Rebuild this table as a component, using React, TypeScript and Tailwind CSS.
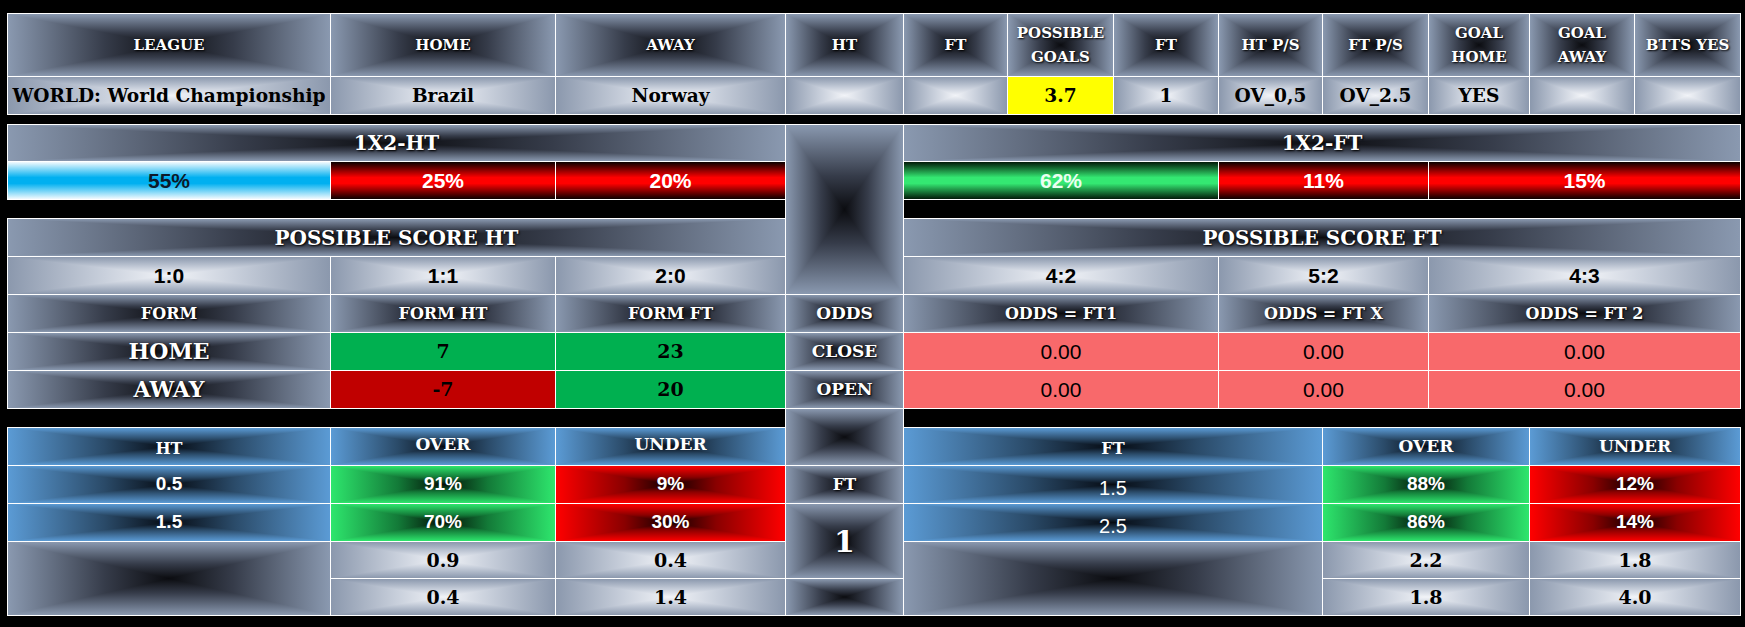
import type { ReactNode } from 'react'

// cell backgrounds (box gradients built from two linear layers)
const DARK =
  'bg-[image:linear-gradient(90deg,#8a99b0,#363c4a_30%,#0b0c10_50%,#363c4a_70%,#8a99b0),linear-gradient(180deg,#8a99b0,#363c4a_30%,#0b0c10_50%,#363c4a_70%,#8a99b0)] bg-blend-lighten'
const LIGHT =
  'bg-[image:linear-gradient(90deg,#8b98ad,#c9d0dc_30%,#f2f4f8_50%,#c9d0dc_70%,#8b98ad),linear-gradient(180deg,#8b98ad,#c9d0dc_30%,#f2f4f8_50%,#c9d0dc_70%,#8b98ad)] bg-blend-darken'
const BLUE =
  'bg-[image:linear-gradient(90deg,#5b9bd5,#2a4a68_30%,#050a12_50%,#2a4a68_70%,#5b9bd5),linear-gradient(180deg,#5b9bd5,#2a4a68_30%,#050a12_50%,#2a4a68_70%,#5b9bd5)] bg-blend-lighten'
const GREEN_BOX =
  'bg-[image:linear-gradient(90deg,#2ee66d,#137a38_30%,#020d05_50%,#137a38_70%,#2ee66d),linear-gradient(180deg,#2ee66d,#137a38_30%,#020d05_50%,#137a38_70%,#2ee66d)] bg-blend-lighten'
const RED_BOX =
  'bg-[image:linear-gradient(90deg,#ff0000,#8a0000_30%,#0d0000_50%,#8a0000_70%,#ff0000),linear-gradient(180deg,#ff0000,#8a0000_30%,#0d0000_50%,#8a0000_70%,#ff0000)] bg-blend-lighten'
const BAR_RED = 'bg-[linear-gradient(180deg,#0a0000,#ff0000_42%,#ff0000_58%,#0a0000)]'
const BAR_GREEN = 'bg-[linear-gradient(180deg,#021a08,#34e872_42%,#34e872_58%,#021a08)]'
const BAR_BLUE = 'bg-[linear-gradient(180deg,#f2fafe,#00b0f0_42%,#00b0f0_58%,#f2fafe)]'

const SLAB = "font-['DejaVu_Serif',serif] font-bold"
const SANS = "font-['Liberation_Sans',Arial,sans-serif]"
const SHADOW = '[text-shadow:1px_1px_2px_#000]'

function Cell({ className = '', children }: { className?: string; children?: ReactNode }) {
  return (
    <div className={`flex items-center justify-center text-center ring-1 ring-white ${className}`}>
      {children}
    </div>
  )
}

const TOP_HEAD = ['LEAGUE', 'HOME', 'AWAY', 'HT', 'FT', 'POSSIBLE\nGOALS', 'FT', 'HT P/S', 'FT P/S', 'GOAL\nHOME', 'GOAL\nAWAY', 'BTTS YES']
const TOP_DATA = ['WORLD: World Championship', 'Brazil', 'Norway', '', '', '3.7', '1', 'OV_0,5', 'OV_2.5', 'YES', '', '']

const COLS = 'grid-cols-[322px_224px_229px_117px_103px_105px_104px_103px_105px_100px_104px_105px]'

export default function App() {
  const title = `${DARK} ${SLAB} text-white text-[20px] ${SHADOW}`
  const formHead = `${DARK} ${SLAB} text-white text-[16px] ${SHADOW}`
  const mid = `${DARK} ${SLAB} text-white ${SHADOW}`
  const score = `${LIGHT} ${SANS} font-bold text-black text-[21px]`
  const odd = `bg-[#f8696b] ${SANS} text-black text-[21px]`
  const light = `${LIGHT} ${SLAB} text-black text-[19px]`
  const bar = `${SANS} text-[21px] font-bold`
  const pct = `${SANS} text-[19px] font-bold text-white`

  return (
    <div className="h-[627px] w-[1745px] overflow-hidden bg-black pl-[7px] pt-[13px]">
      {/* match table */}
      <div className={`grid w-fit gap-px p-px ${COLS} grid-rows-[62px_37px]`}>
        {TOP_HEAD.map((h, i) => (
          <Cell
            key={`h${i}`}
            className={`${DARK} ${SLAB} whitespace-pre-line px-1 text-[15px] leading-[24px] text-white ${SHADOW}`}
          >
            {h}
          </Cell>
        ))}
        {TOP_DATA.map((d, i) => (
          <Cell
            key={`d${i}`}
            className={`${i === 5 ? 'bg-[#ffff00]' : LIGHT} ${SLAB} whitespace-nowrap text-[18.6px] text-black`}
          >
            {d}
          </Cell>
        ))}
      </div>

      {/* stats grid */}
      <div
        className={`mt-[9px] grid w-fit gap-px p-px ${COLS} grid-rows-[36px_37px_18px_37px_37px_37px_37px_37px_18px_37px_37px_37px_36px_36px]`}
      >
        <Cell className={`col-start-1 col-end-4 row-start-1 ${title}`}>1X2-HT</Cell>
        <Cell className={`col-start-4 col-end-5 row-start-1 row-end-6 ${mid}`} />
        <Cell className={`col-start-5 col-end-13 row-start-1 ${title}`}>1X2-FT</Cell>

        <Cell className={`col-start-1 row-start-2 ${BAR_BLUE} ${bar} text-[#0d1a2a]`}>55%</Cell>
        <Cell className={`col-start-2 row-start-2 ${BAR_RED} ${bar} text-white`}>25%</Cell>
        <Cell className={`col-start-3 row-start-2 ${BAR_RED} ${bar} text-white`}>20%</Cell>
        <Cell className={`col-start-5 col-end-8 row-start-2 ${BAR_GREEN} ${bar} text-[#eafff0]`}>62%</Cell>
        <Cell className={`col-start-8 col-end-10 row-start-2 ${BAR_RED} ${bar} text-white`}>11%</Cell>
        <Cell className={`col-start-10 col-end-13 row-start-2 ${BAR_RED} ${bar} text-white`}>15%</Cell>

        <Cell className={`col-start-1 col-end-4 row-start-4 ${title}`}>POSSIBLE SCORE HT</Cell>
        <Cell className={`col-start-5 col-end-13 row-start-4 ${title}`}>POSSIBLE SCORE FT</Cell>

        <Cell className={`col-start-1 row-start-5 ${score}`}>1:0</Cell>
        <Cell className={`col-start-2 row-start-5 ${score}`}>1:1</Cell>
        <Cell className={`col-start-3 row-start-5 ${score}`}>2:0</Cell>
        <Cell className={`col-start-5 col-end-8 row-start-5 ${score}`}>4:2</Cell>
        <Cell className={`col-start-8 col-end-10 row-start-5 ${score}`}>5:2</Cell>
        <Cell className={`col-start-10 col-end-13 row-start-5 ${score}`}>4:3</Cell>

        <Cell className={`col-start-1 row-start-6 ${formHead}`}>FORM</Cell>
        <Cell className={`col-start-2 row-start-6 ${formHead}`}>FORM HT</Cell>
        <Cell className={`col-start-3 row-start-6 ${formHead}`}>FORM FT</Cell>
        <Cell className={`col-start-4 row-start-6 ${mid} text-[17px]`}>ODDS</Cell>
        <Cell className={`col-start-5 col-end-8 row-start-6 ${formHead}`}>ODDS = FT1</Cell>
        <Cell className={`col-start-8 col-end-10 row-start-6 ${formHead}`}>ODDS = FT X</Cell>
        <Cell className={`col-start-10 col-end-13 row-start-6 ${formHead}`}>ODDS = FT 2</Cell>

        <Cell className={`col-start-1 row-start-7 ${DARK} ${SLAB} text-[22px] text-white ${SHADOW}`}>HOME</Cell>
        <Cell className={`col-start-2 row-start-7 bg-[#00b050] ${SLAB} text-[19px] text-black`}>7</Cell>
        <Cell className={`col-start-3 row-start-7 bg-[#00b050] ${SLAB} text-[19px] text-black`}>23</Cell>
        <Cell className={`col-start-4 row-start-7 ${mid} text-[17px]`}>CLOSE</Cell>
        <Cell className={`col-start-5 col-end-8 row-start-7 ${odd}`}>0.00</Cell>
        <Cell className={`col-start-8 col-end-10 row-start-7 ${odd}`}>0.00</Cell>
        <Cell className={`col-start-10 col-end-13 row-start-7 ${odd}`}>0.00</Cell>

        <Cell className={`col-start-1 row-start-8 ${DARK} ${SLAB} text-[22px] text-white ${SHADOW}`}>AWAY</Cell>
        <Cell className={`col-start-2 row-start-8 bg-[#c00000] ${SLAB} text-[19px] text-black`}>-7</Cell>
        <Cell className={`col-start-3 row-start-8 bg-[#00b050] ${SLAB} text-[19px] text-black`}>20</Cell>
        <Cell className={`col-start-4 row-start-8 ${mid} text-[17px]`}>OPEN</Cell>
        <Cell className={`col-start-5 col-end-8 row-start-8 ${odd}`}>0.00</Cell>
        <Cell className={`col-start-8 col-end-10 row-start-8 ${odd}`}>0.00</Cell>
        <Cell className={`col-start-10 col-end-13 row-start-8 ${odd}`}>0.00</Cell>

        <Cell className={`col-start-4 row-start-9 row-end-11 ${mid}`} />

        {/* over / under */}
        <Cell className={`col-start-1 row-start-10 ${BLUE} ${SLAB} pt-1 text-[16px] text-white`}>HT</Cell>
        <Cell className={`col-start-2 row-start-10 ${BLUE} ${SLAB} pb-1 text-[17px] text-white`}>OVER</Cell>
        <Cell className={`col-start-3 row-start-10 ${BLUE} ${SLAB} pb-1 text-[17px] text-white`}>UNDER</Cell>
        <Cell className={`col-start-5 col-end-9 row-start-10 ${BLUE} ${SLAB} pt-1 text-[16px] text-white`}>FT</Cell>
        <Cell className={`col-start-9 col-end-11 row-start-10 ${BLUE} ${SLAB} text-[17px] text-white`}>OVER</Cell>
        <Cell className={`col-start-11 col-end-13 row-start-10 ${BLUE} ${SLAB} text-[17px] text-white`}>UNDER</Cell>

        <Cell className={`col-start-1 row-start-11 ${BLUE} ${pct}`}>0.5</Cell>
        <Cell className={`col-start-2 row-start-11 ${GREEN_BOX} ${pct}`}>91%</Cell>
        <Cell className={`col-start-3 row-start-11 ${RED_BOX} ${pct}`}>9%</Cell>
        <Cell className={`col-start-4 row-start-11 ${mid} text-[16px]`}>FT</Cell>
        <Cell className={`col-start-5 col-end-9 row-start-11 ${BLUE} ${SANS} items-end text-[20px] leading-[30px] text-white`}>1.5</Cell>
        <Cell className={`col-start-9 col-end-11 row-start-11 ${GREEN_BOX} ${pct}`}>88%</Cell>
        <Cell className={`col-start-11 col-end-13 row-start-11 ${RED_BOX} ${pct}`}>12%</Cell>

        <Cell className={`col-start-1 row-start-12 ${BLUE} ${pct}`}>1.5</Cell>
        <Cell className={`col-start-2 row-start-12 ${GREEN_BOX} ${pct}`}>70%</Cell>
        <Cell className={`col-start-3 row-start-12 ${RED_BOX} ${pct}`}>30%</Cell>
        <Cell className={`col-start-4 row-start-12 row-end-14 ${mid} text-[30px]`}>1</Cell>
        <Cell className={`col-start-5 col-end-9 row-start-12 ${BLUE} ${SANS} items-end text-[20px] leading-[30px] text-white`}>2.5</Cell>
        <Cell className={`col-start-9 col-end-11 row-start-12 ${GREEN_BOX} ${pct}`}>86%</Cell>
        <Cell className={`col-start-11 col-end-13 row-start-12 ${RED_BOX} ${pct}`}>14%</Cell>

        <Cell className={`col-start-1 row-start-13 row-end-15 ${DARK}`} />
        <Cell className={`col-start-2 row-start-13 ${light}`}>0.9</Cell>
        <Cell className={`col-start-3 row-start-13 ${light}`}>0.4</Cell>
        <Cell className={`col-start-5 col-end-9 row-start-13 row-end-15 ${DARK}`} />
        <Cell className={`col-start-9 col-end-11 row-start-13 ${light}`}>2.2</Cell>
        <Cell className={`col-start-11 col-end-13 row-start-13 ${light}`}>1.8</Cell>

        <Cell className={`col-start-2 row-start-14 ${light}`}>0.4</Cell>
        <Cell className={`col-start-3 row-start-14 ${light}`}>1.4</Cell>
        <Cell className={`col-start-4 row-start-14 ${mid}`} />
        <Cell className={`col-start-9 col-end-11 row-start-14 ${light}`}>1.8</Cell>
        <Cell className={`col-start-11 col-end-13 row-start-14 ${light}`}>4.0</Cell>
      </div>
    </div>
  )
}
